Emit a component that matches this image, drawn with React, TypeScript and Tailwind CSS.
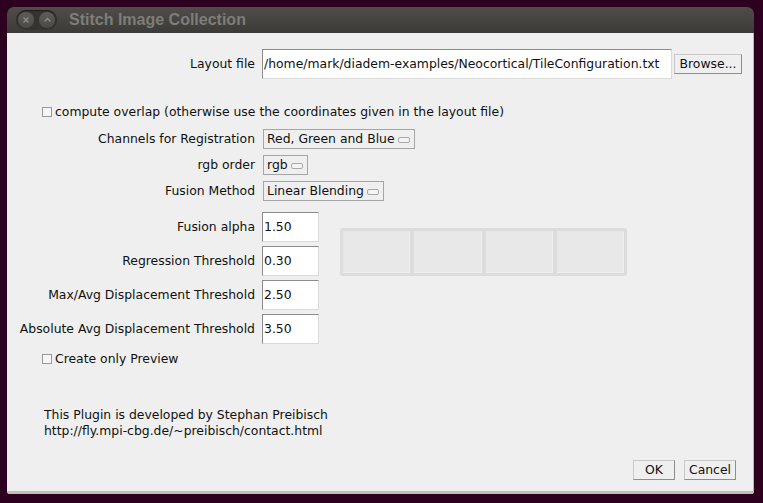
import React from 'react';

const FONT = { fontFamily: '"DejaVu Sans", "Noto Sans", sans-serif' };

const Label: React.FC<{ children: React.ReactNode }> = ({ children }) => (
  <div className="w-[249px] shrink-0 pr-[1px] text-right">{children}</div>
);

const Choice: React.FC<{ value: string }> = ({ value }) => (
  <div className="ml-[7px] flex h-[20px] items-center border border-[#a5a5a5] bg-[#efefef] pl-[3px] pr-[4px]">
    <span>{value}</span>
    <span className="ml-[3px] mt-[1px] h-[6px] w-[12px] rounded-[2px] border border-[#a8a8a8] bg-[#f4f4f4]" />
  </div>
);

const NumField: React.FC<{ label: string; value: string }> = ({ label, value }) => (
  <div className="flex items-center">
    <Label>{label}</Label>
    <div className="ml-[6px] flex h-[30px] w-[57px] items-center border-l border-t border-[#8c8c8c] border-r-[#dadada] border-b-[#dadada] border-r border-b bg-white pl-[1px]">
      {value}
    </div>
  </div>
);

const Checkbox: React.FC<{ text: string }> = ({ text }) => (
  <div className="ml-[35px] flex h-[16px] items-center">
    <span className="mr-[3px] h-[10px] w-[10px] border border-[#9a9a9a] bg-[#f6f6f6]" />
    <span>{text}</span>
  </div>
);

const Button: React.FC<{ children: React.ReactNode; w: string }> = ({ children, w }) => (
  <div className={`flex h-[20px] ${w} items-center justify-center border border-t-[#c8c8c8] border-l-[#c8c8c8] border-r-[#8e8e8e] border-b-[#8e8e8e] bg-[#efefef]`}>
    {children}
  </div>
);

export default function App() {
  return (
    <div className="h-[503px] w-[763px] overflow-hidden bg-[#2c001e] pl-[7px] pt-[7px]" style={FONT}>
      <div className="flex h-[487px] w-[747px] flex-col overflow-hidden rounded-t-[7px] rounded-b-[3px]">
        {/* title bar */}
        <div className="flex h-[26px] shrink-0 items-center bg-gradient-to-b from-[#4e4d49] to-[#3c3b37]">
          <div className="ml-[9px] flex h-[20px] w-[41px] items-center justify-between rounded-full bg-[#34332f] px-[2px] shadow-[inset_0_1px_1px_rgba(0,0,0,0.4)]">
            <span className="flex h-[16px] w-[16px] items-center justify-center rounded-full bg-gradient-to-b from-[#5e5d59] to-[#4a4945]">
              <svg width="8" height="8" viewBox="0 0 8 8">
                <path d="M1.5 1.5 L6.5 6.5 M6.5 1.5 L1.5 6.5" stroke="#8d8c87" strokeWidth="1.4" />
              </svg>
            </span>
            <span className="flex h-[16px] w-[16px] items-center justify-center rounded-full bg-gradient-to-b from-[#5e5d59] to-[#4a4945]">
              <svg width="9" height="8" viewBox="0 0 9 8">
                <path d="M1.5 5.5 L4.5 2.5 L7.5 5.5" stroke="#8d8c87" strokeWidth="1.4" fill="none" />
              </svg>
            </span>
          </div>
          <span
            className="ml-[12px] text-[16px] font-bold text-[#7e7d78]"
            style={{ fontFamily: '"Liberation Sans", "DejaVu Sans", sans-serif' }}
          >
            Stitch Image Collection
          </span>
        </div>

        {/* content */}
        <div className="flex flex-1 flex-col border-b-[3px] border-r border-[#c2beb6] border-r-[#bdb9b1] bg-[#efefef] text-[12.4px] text-[#111]">
          <div className="mt-[16px] flex items-center">
            <Label>Layout file</Label>
            <div className="ml-[6px] flex h-[30px] w-[410px] items-center border-l border-t border-[#8c8c8c] border-r-[#dadada] border-b-[#dadada] border-r border-b bg-white pl-[1px]">
              /home/mark/diadem-examples/Neocortical/TileConfiguration.txt
            </div>
            <div className="ml-[2px]">
              <Button w="w-[68px]">Browse...</Button>
            </div>
          </div>

          <div className="mt-[25px]">
            <Checkbox text="compute overlap (otherwise use the coordinates given in the layout file)" />
          </div>

          <div className="mt-[9px] flex items-center">
            <Label>Channels for Registration</Label>
            <Choice value="Red, Green and Blue" />
          </div>
          <div className="mt-[6px] flex items-center">
            <Label>rgb order</Label>
            <Choice value="rgb" />
          </div>
          <div className="mt-[6px] flex items-center">
            <Label>Fusion Method</Label>
            <Choice value="Linear Blending" />
          </div>

          <div className="mt-[11px] flex items-start">
            <div className="flex flex-col gap-[4px]">
              <NumField label="Fusion alpha" value="1.50" />
              <NumField label="Regression Threshold" value="0.30" />
              <NumField label="Max/Avg Displacement Threshold" value="2.50" />
              <NumField label="Absolute Avg Displacement Threshold" value="3.50" />
            </div>
            <div className="ml-[21px] mt-[16px] flex h-[48px] w-[287px] gap-[4px] rounded-[2px] bg-[#dcdcdc] p-[3px]">
              {[0, 1, 2, 3].map((i) => (
                <div key={i} className="flex-1 border border-[#eeeeee] border-t-[#e6e6e6] border-l-[#e6e6e6] bg-[#e8e8e8]" />
              ))}
            </div>
          </div>

          <div className="mt-[7px]">
            <Checkbox text="Create only Preview" />
          </div>

          <div className="ml-[37px] mt-[40px] leading-[16px]">
            <div>This Plugin is developed by Stephan Preibisch</div>
            <div>http://fly.mpi-cbg.de/~preibisch/contact.html</div>
          </div>

          <div className="mr-[17px] mt-[21px] flex justify-end gap-[9px]">
            <Button w="w-[42px]">OK</Button>
            <Button w="w-[52px]">Cancel</Button>
          </div>
        </div>
      </div>
    </div>
  );
}
